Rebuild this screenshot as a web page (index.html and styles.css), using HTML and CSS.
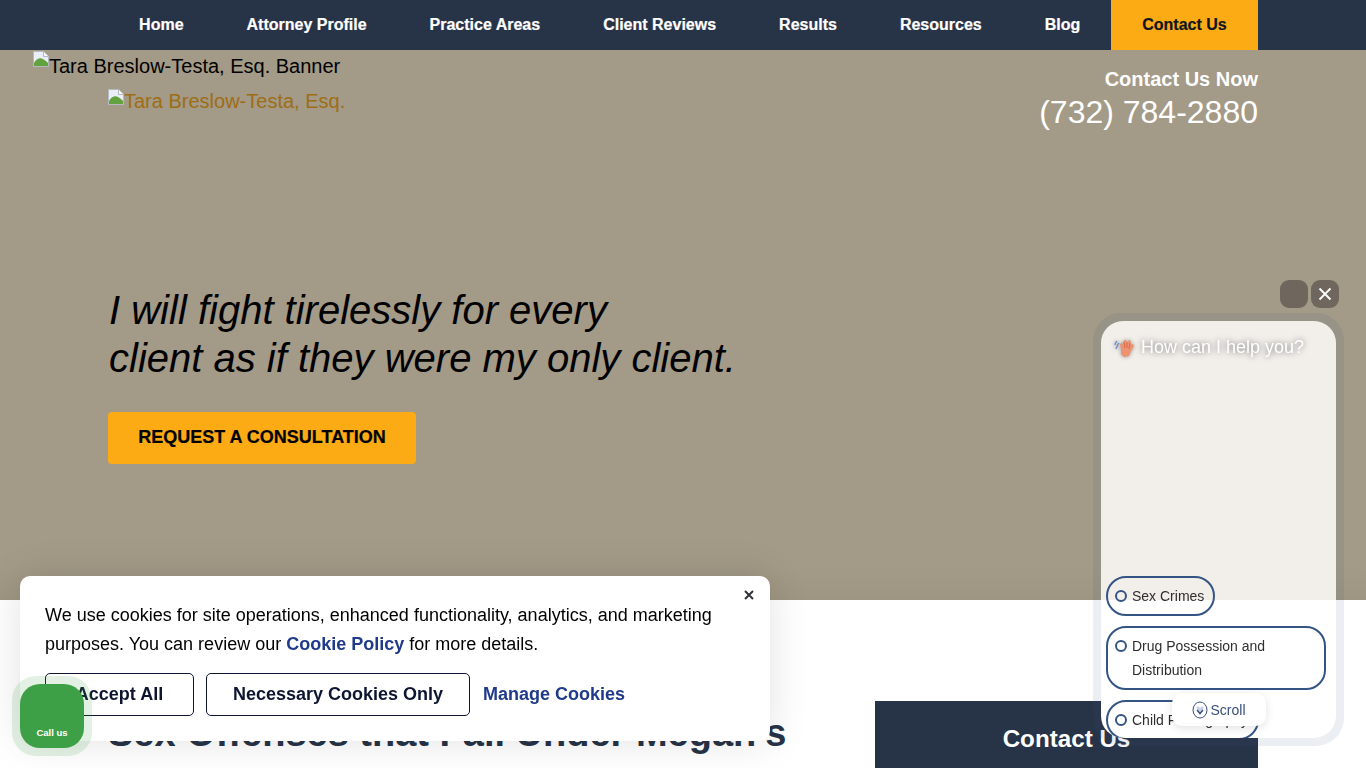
FILE: index.html
```html
<!DOCTYPE html>
<html lang="en">
<head>
    <meta charset="UTF-8">
    <title>Tara Breslow-Testa, Esq.</title>
    <link rel="stylesheet" href="styles.css">
</head>
<body>
    <nav class="main-nav">
        <a href="#">Home</a>
        <a href="#">Attorney Profile</a>
        <a href="#">Practice Areas</a>
        <a href="#">Client Reviews</a>
        <a href="#">Results</a>
        <a href="#">Resources</a>
        <a href="#">Blog</a>
        <a href="#" class="nav-cta">Contact Us</a>
    </nav>

    <header class="hero">
        <div class="banner-alt">
            <svg class="broken-img" viewBox="0 0 16 16"><path d="M0.5 0.5h10l5 5v10H0.5z" fill="#e9eef8" stroke="#b4b8c0"/><path d="M1 12c2-4 6-6 9-4 2 1 4 3 5 4v3H1z" fill="#62a23f"/><path d="M10.5 0.5v5h5" fill="#fff" stroke="#b4b8c0"/></svg>Tara Breslow-Testa, Esq. Banner
        </div>
        <div class="hero-top">
            <a href="#" class="logo-alt">
                <svg class="broken-img" viewBox="0 0 16 16"><path d="M0.5 0.5h10l5 5v10H0.5z" fill="#e9eef8" stroke="#b4b8c0"/><path d="M1 12c2-4 6-6 9-4 2 1 4 3 5 4v3H1z" fill="#62a23f"/><path d="M10.5 0.5v5h5" fill="#fff" stroke="#b4b8c0"/></svg>Tara Breslow-Testa, Esq.
            </a>
            <div class="hero-phone">
                <div class="phone-label">Contact Us Now</div>
                <div class="phone-number">(732) 784-2880</div>
            </div>
        </div>
        <p class="hero-quote">I will fight tirelessly for every<br>client as if they were my only client.</p>
        <a href="#" class="hero-btn">REQUEST A CONSULTATION</a>
    </header>

    <main class="content">
        <h2>Sex Offenses that Fall Under Megan's</h2>
        <aside class="contact-panel">Contact Us</aside>
    </main>

    <div class="cookie-box">
        <svg class="cookie-close" viewBox="0 0 10 10"><path d="M1 1l8 8M9 1l-8 8" stroke="#2b2f36" stroke-width="1.9"/></svg>
        <p>We use cookies for site operations, enhanced functionality, analytics, and marketing purposes. You can review our <a href="#">Cookie Policy</a> for more details.</p>
        <div class="cookie-actions">
            <button class="accept-btn">Accept All</button>
            <button class="necessary-btn">Necessary Cookies Only</button>
            <a href="#" class="manage-link">Manage Cookies</a>
        </div>
    </div>

    <div class="call-ring">
        <div class="call-btn">Call us</div>
    </div>

    <div class="chat-controls">
        <span class="chat-ctrl"></span>
        <span class="chat-ctrl">
            <svg viewBox="0 0 14 14"><path d="M1.5 1.5l11 11M12.5 1.5l-11 11" stroke="#fff" stroke-width="1.8"/></svg>
        </span>
    </div>
    <div class="chat-frame">
        <div class="chat-panel">
            <div class="chat-title">
                <svg class="wave" viewBox="0 0 22 22">
                    <path d="M2 13c1-2 1-4 3-6M1 9c0-2 1-3 2-4" fill="none" stroke="#6f8fc4" stroke-width="1.4"/>
                    <path d="M7 13l-1-5 2-1 1 2 1-5 2 0 1 3 2-3 2 1-1 4 3-1 1 2-3 5-2 5-5 1-3-3z" fill="#ee9270"/>
                    <path d="M10 6l1 6M13 6l0 6M16 7l-1 6" stroke="#d9694a" stroke-width="1"/>
                </svg>
                How can I help you?
            </div>
            <div class="chat-options">
                <div class="chat-option"><i></i><span>Sex Crimes</span></div>
                <div class="chat-option"><i></i><span>Drug Possession and Distribution</span></div>
                <div class="chat-option"><i></i><span>Child Pornography</span></div>
            </div>
            <div class="chat-scroll">
                <svg viewBox="0 0 16 18">
                    <ellipse cx="8" cy="9" rx="7" ry="8" fill="#fff" stroke="#3a4f7e"/>
                    <path d="M4.5 6c1.5-1 2.5 0 3.5 1 1-1 2-2 3.5-1 .5 2-2 4-3.5 5-1.500-1-4-3-3.500-5z" fill="#c9d2e6"/>
                    <path d="M5 9l3 3.500 3-3.500" fill="none" stroke="#3a4f7e" stroke-width="1.500"/>
                </svg>
                Scroll
            </div>
        </div>
    </div>
</body>
</html>
```

FILE: styles.css
```css
:root {
    --navy: #273347;
    --gold: #fdab15;
    --tan: #a39a87;
    --blue: #1f3a8a;
    --ring: #345484;
}

html, body {
    height: 100%;
    overflow: hidden;
}

body {
    margin: 0;
    font-family: "Liberation Sans", Arial, sans-serif;
    color: #000;
    background-color: #fff;
}

.main-nav {
    height: 50px;
    display: flex;
    padding-left: 107.6px;
    background-color: var(--navy);
}

.main-nav a {
    padding: 0 31.5px;
    line-height: 49px;
    font-size: 16px;
    font-weight: 700;
    color: #fff;
    text-decoration: none;
    -webkit-text-stroke: 0.2px #fff;
}

.main-nav a.nav-cta {
    margin-left: -1px;
    background-color: var(--gold);
    color: #10151f;
    -webkit-text-stroke: 0.2px #10151f;
}

.hero {
    height: 550px;
    box-sizing: border-box;
    padding: 0 108px;
    background: linear-gradient(to bottom, var(--tan) 94%, #9e9582 100%);
}

.broken-img {
    width: 16px;
    height: 16px;
    vertical-align: 3px;
}

.banner-alt {
    margin-left: -75px;
    height: 32px;
    padding-top: 1px;
    font-size: 20px;
    line-height: 31px;
}

.banner-alt .broken-img {
    vertical-align: 6px;
}

.hero-top {
    display: flex;
    justify-content: space-between;
    height: 203px;
}

.logo-alt {
    font-size: 20px;
    line-height: 36px;
    color: #9e6d14;
    text-decoration: none;
}

.hero-phone {
    margin-top: -17px;
    text-align: right;
    color: #fff;
}

.phone-label {
    font-size: 20px;
    font-weight: 700;
    line-height: 26px;
}

.phone-number {
    font-size: 32px;
    line-height: 40px;
}

.hero-quote {
    margin: 0 0 30px;
    padding-left: 1px;
    font-size: 40px;
    font-style: italic;
    line-height: 48px;
}

.hero-btn {
    display: inline-block;
    width: 308px;
    height: 52px;
    line-height: 50px;
    text-align: center;
    border-radius: 4px;
    background-color: var(--gold);
    color: #000;
    font-size: 18px;
    font-weight: 700;
    text-decoration: none;
    -webkit-text-stroke: 0.2px #000;
}

.content {
    display: flex;
    justify-content: space-between;
    padding: 101px 108px 0;
}

.content h2 {
    margin: 10px 0 0;
    font-size: 38px;
    line-height: 44px;
    white-space: nowrap;
    color: var(--navy);
}

.contact-panel {
    box-sizing: border-box;
    width: 383px;
    height: 200px;
    padding-top: 24px;
    background-color: var(--navy);
    color: #fff;
    font-size: 24.2px;
    font-weight: 700;
    text-align: center;
}

.cookie-box {
    position: fixed;
    left: 20px;
    top: 576px;
    box-sizing: border-box;
    width: 750px;
    height: 165px;
    padding: 25px;
    background-color: #fff;
    border-radius: 10px;
    box-shadow: 0 0 40px rgba(0, 0, 0, 0.12);
}

.cookie-box p {
    margin: 0 0 14px;
    font-size: 18px;
    line-height: 29px;
}

.cookie-box p a {
    color: var(--blue);
    font-weight: 700;
    text-decoration: none;
}

.cookie-close {
    position: absolute;
    top: 14px;
    right: 16px;
    width: 10px;
    height: 10px;
}

.cookie-actions {
    display: flex;
    align-items: center;
    gap: 12px;
}

.cookie-actions button {
    height: 43px;
    background-color: #fff;
    border: 1px solid #0d1530;
    border-radius: 5px;
    color: #0d1530;
    font-family: inherit;
    font-size: 18px;
    font-weight: 700;
}

.accept-btn {
    width: 149px;
}

.necessary-btn {
    width: 264px;
}

.manage-link {
    margin-left: 1px;
    color: var(--blue);
    font-size: 18px;
    font-weight: 700;
    text-decoration: none;
}

.call-ring {
    position: fixed;
    left: 12px;
    top: 676px;
    width: 80px;
    height: 80px;
    box-sizing: border-box;
    padding: 8px;
    border-radius: 24px;
    background-color: rgba(62, 160, 70, 0.15);
}

.call-btn {
    height: 64px;
    box-sizing: border-box;
    padding-top: 42px;
    border-radius: 20px;
    background-color: #3ea046;
    color: #fff;
    font-size: 9.5px;
    font-weight: 700;
    line-height: 14px;
    text-align: center;
}

.chat-controls {
    position: fixed;
    top: 280px;
    left: 1280px;
    display: flex;
    gap: 3px;
}

.chat-ctrl {
    display: flex;
    align-items: center;
    justify-content: center;
    width: 28px;
    height: 28px;
    border-radius: 9px;
    background-color: #6f675d;
}

.chat-ctrl svg {
    width: 14px;
    height: 14px;
}

.chat-frame {
    position: fixed;
    top: 313px;
    left: 1093px;
    width: 251px;
    height: 433px;
    box-sizing: border-box;
    padding: 8px;
    border-radius: 28px;
    background-color: rgba(60, 90, 140, 0.1);
}

.chat-panel {
    position: relative;
    height: 417px;
    box-sizing: border-box;
    overflow: hidden;
    border-radius: 22px;
    background: linear-gradient(to bottom, #f2efeb 279px, #ffffff 279px);
}

.chat-title {
    display: flex;
    align-items: center;
    gap: 5px;
    padding: 15px 0 0 13px;
    font-size: 18px;
    line-height: 22px;
    color: #fff;
    text-shadow: 0 0 6px rgba(0, 0, 0, 0.6);
}

.wave {
    flex: none;
    width: 22px;
    height: 22px;
    filter: blur(0.6px) drop-shadow(0 0 2px rgba(0, 0, 0, 0.4));
}

.chat-options {
    position: absolute;
    top: 255px;
    left: 5px;
    display: flex;
    flex-direction: column;
    align-items: flex-start;
    gap: 10px;
}

.chat-option {
    display: flex;
    box-sizing: border-box;
    max-width: 220px;
    padding: 6px 9px 6px 7px;
    border: 2px solid var(--ring);
    border-radius: 20px;
    font-size: 14px;
    line-height: 24px;
    color: #2e2e2e;
}

.chat-option i {
    flex: none;
    width: 8px;
    height: 8px;
    margin: 6px 5px 0 0;
    border: 2px solid var(--ring);
    border-radius: 50%;
}

.chat-scroll {
    position: absolute;
    top: 372px;
    left: 71px;
    display: flex;
    align-items: center;
    justify-content: center;
    gap: 2px;
    width: 94px;
    height: 33px;
    border-radius: 10px;
    background-color: #fff;
    box-shadow: 0 2px 10px rgba(0, 0, 0, 0.12);
    color: #3a4f7e;
    font-size: 14px;
}

.chat-scroll svg {
    width: 16px;
    height: 18px;
}
```
